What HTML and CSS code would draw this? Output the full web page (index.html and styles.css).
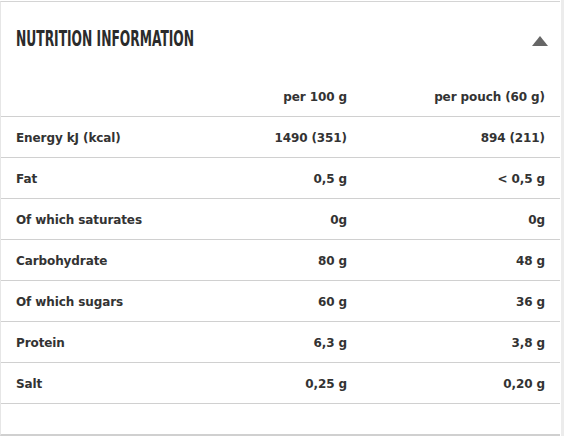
FILE: index.html
```html
<!DOCTYPE html>
<html>
<head>
<meta charset="utf-8">
<link rel="stylesheet" href="styles.css">
</head>
<body>
<div class="page">
  <section class="card">
    <header class="card-head">
      <h2 class="title">NUTRITION INFORMATION</h2>
      <span class="toggle" aria-hidden="true"></span>
    </header>
    <div class="table">
      <div class="row head"><span></span><span class="num">per 100 g</span><span class="num">per pouch (60 g)</span></div>
      <div class="row"><span>Energy kJ (kcal)</span><span class="num">1490 (351)</span><span class="num">894 (211)</span></div>
      <div class="row"><span>Fat</span><span class="num">0,5 g</span><span class="num">&lt; 0,5 g</span></div>
      <div class="row"><span>Of which saturates</span><span class="num">0g</span><span class="num">0g</span></div>
      <div class="row"><span>Carbohydrate</span><span class="num">80 g</span><span class="num">48 g</span></div>
      <div class="row"><span>Of which sugars</span><span class="num">60 g</span><span class="num">36 g</span></div>
      <div class="row"><span>Protein</span><span class="num">6,3 g</span><span class="num">3,8 g</span></div>
      <div class="row"><span>Salt</span><span class="num">0,25 g</span><span class="num">0,20 g</span></div>
    </div>
  </section>
  <div class="rail"></div>
</div>
</body>
</html>
```

FILE: styles.css
```css
html, body { margin: 0; padding: 0; background: #fff; }
.page {
  display: flex;
  width: 564px;
  height: 436px;
}
.card {
  width: 560px;
  height: 435px;
  box-sizing: border-box;
  border-top: 1px solid #d4d4d4;
  border-left: 1px solid #e6e6e6;
  border-bottom: 2px solid #d0d0d0;
  background: #fff;
  margin-top: 1px;
  font-family: "DejaVu Sans", Verdana, sans-serif;
  color: #333;
}
.rail {
  width: 3px;
  margin-left: 1px;
  background: #ececec;
}
.card-head {
  height: 74px;
  display: flex;
  align-items: center;
  justify-content: space-between;
  padding: 0 12px 0 15px;
}
.title {
  margin: 0;
  font-family: "Liberation Sans Narrow", "DejaVu Sans", sans-serif;
  font-stretch: condensed;
  font-weight: 700;
  font-size: 21px;
  color: #2b2b2b;
  transform: scaleX(0.65);
  transform-origin: left center;
  white-space: nowrap;
}
.toggle {
  width: 0;
  height: 0;
  border-left: 8px solid transparent;
  border-right: 8px solid transparent;
  border-bottom: 10px solid #666;
  margin-top: 3px;
}
.row {
  display: grid;
  grid-template-columns: 1fr 190px 198px;
  align-items: center;
  height: 41px;
  box-sizing: border-box;
  border-bottom: 1px solid #d0d0d0;
  padding: 2px 15px 0;
  font-size: 12px;
  font-weight: 700;
  letter-spacing: -0.1px;
}
.num { text-align: right; }
```
